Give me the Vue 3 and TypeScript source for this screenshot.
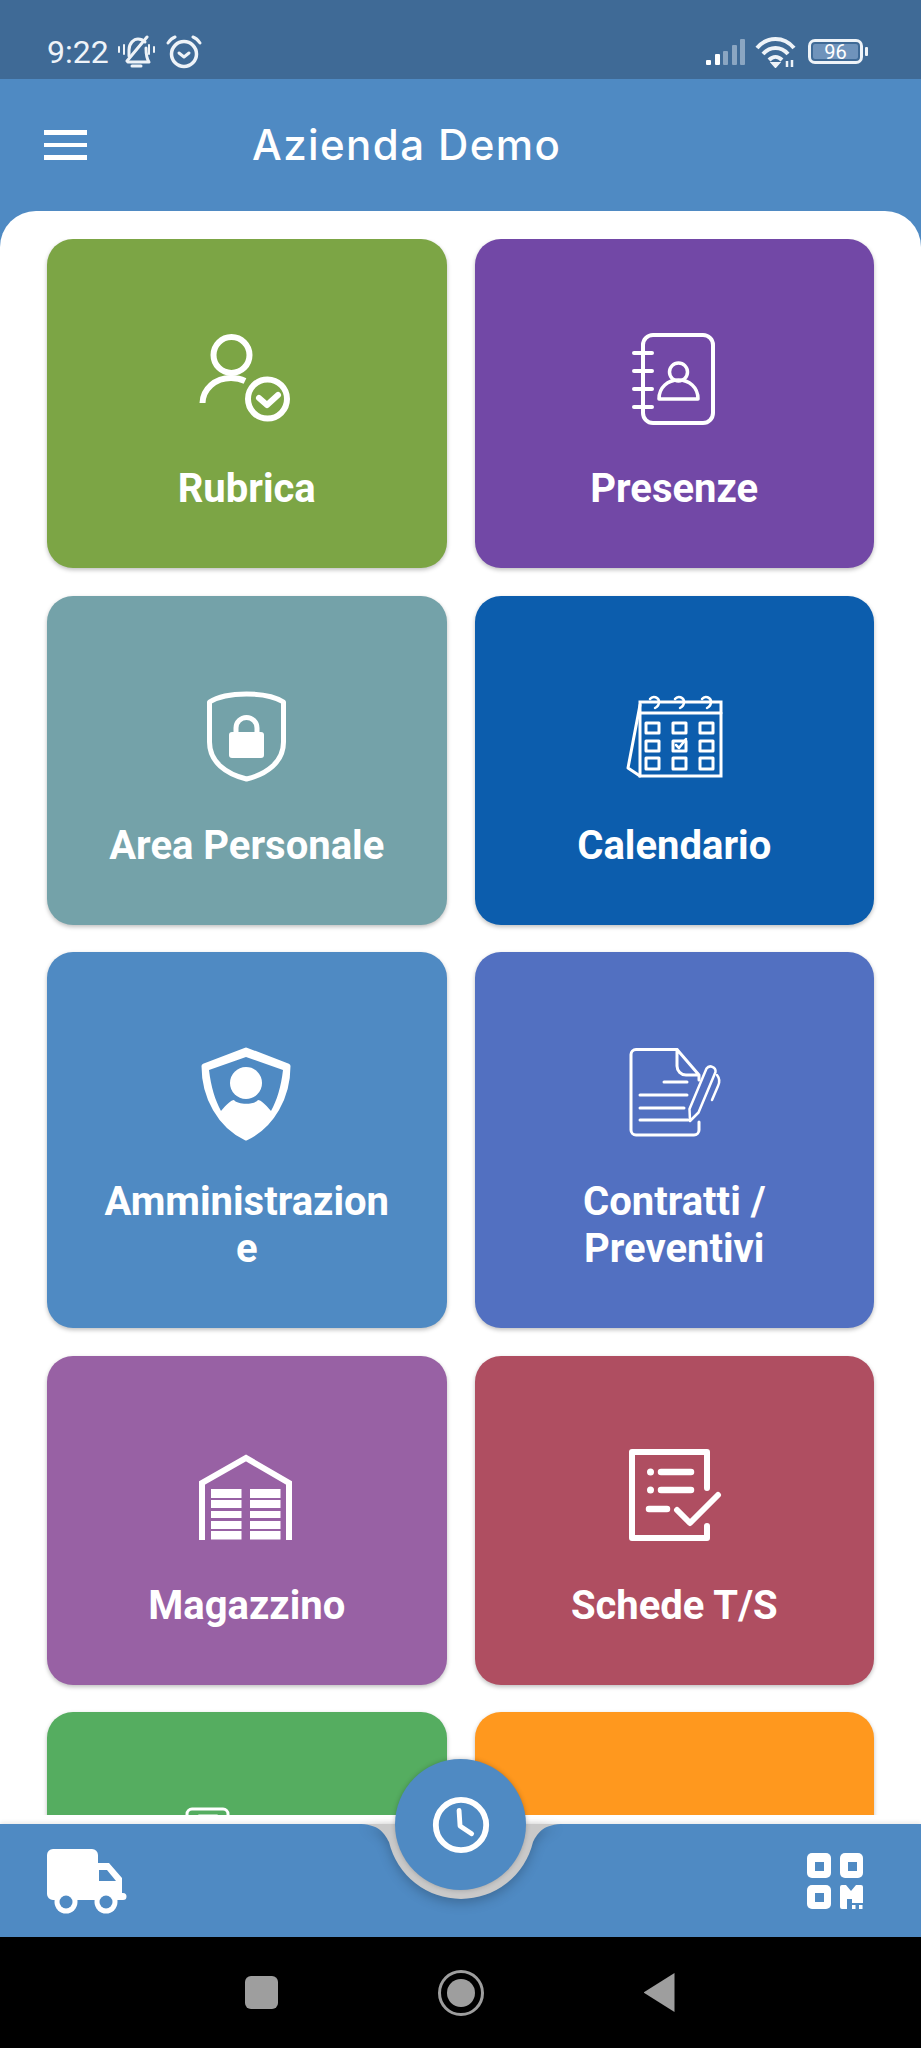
<template>
  <div class="phone">
    <div class="status">
      <div class="status-left">
        <span class="time">9:22</span>
        <svg class="st-bell" viewBox="0 0 38 34" fill="none" stroke="#eef3f8" stroke-width="3" stroke-linecap="round">
          <path d="M12 21 V15 C12 8 17 4 21 4 C24 4 26 5 28 7" />
          <path d="M29 13 C29 20 30 24 32 27 H11" stroke-linejoin="round" />
          <path d="M30 2 L10 26" />
          <path d="M15 31 H24" />
          <path d="M2 12 V17 M7 10 V19 M32 10 V19 M37 12 V17" stroke-width="2" />
        </svg>
        <svg class="st-alarm" viewBox="0 0 36 34" fill="none" stroke="#eef3f8" stroke-linecap="round" stroke-linejoin="round">
          <circle cx="18" cy="19" r="12.500" stroke-width="3.500" />
          <path d="M2 8 C4 5 6 3 9 2 M34 8 C32 5 30 3 27 2" stroke-width="3" />
          <path d="M13 18 L18 22 L23 18" stroke-width="3" />
        </svg>
      </div>
      <div class="status-right">
        <div class="signal">
          <i v-for="b in bars" :key="b.h" :class="{ dim: b.dim }" :style="{ height: b.h + 'px' }"></i>
        </div>
        <svg class="st-wifi" viewBox="0 0 42 32" fill="none" stroke="#eef3f8" stroke-width="4" stroke-linecap="butt">
          <path d="M2 12 C12 0 29 0 39 12" />
          <path d="M8 18 C15 10 26 10 33 18" />
          <path d="M14 24 C18 20 23 20 27 24" />
          <path d="M17 27 L20.500 31 L24 27 Z" fill="#eef3f8" stroke-width="2" />
          <path d="M32 25 V31 M37 24 V31" stroke-width="2.500" />
        </svg>
        <div class="battery">
          <div class="battery-box"><span>96</span></div>
          <i class="battery-tip"></i>
        </div>
      </div>
    </div>

    <header class="topbar">
      <div class="burger"><i></i><i></i><i></i></div>
      <h1>Azienda Demo</h1>
    </header>

    <main class="main">
      <div class="sheet">
        <div class="scroller">
          <div class="grid">
            <div v-for="card in cards" :key="card.icon" class="card" :style="{ background: card.color }">
              <svg class="icon" viewBox="0 0 120 100" fill="none" stroke="#fff" stroke-linecap="round" stroke-linejoin="round">
                <template v-if="card.icon === 'rubrica'">
                  <g stroke-width="6">
                    <ellipse cx="44.500" cy="26" rx="18" ry="18" />
                    <path d="M15.500 74 C16 60 28 49 44 49 C49 49 54 50 58 52" stroke-linecap="butt" />
                    <circle cx="80.500" cy="70" r="19.500" />
                    <path d="M72 69 L80 76 L91 66" />
                  </g>
                </template>
                <template v-else-if="card.icon === 'presenze'">
                  <rect x="29" y="6" width="70" height="88" rx="10" stroke-width="4" />
                  <path d="M20 24 H38 M20 42 H38 M20 60 H38 M20 78 H38" stroke-width="4" />
                  <circle cx="64.500" cy="43" r="9" stroke-width="3.500" />
                  <path d="M45 70 C45 58 54 51 64.500 51 C75 51 84 58 84 70 Z" stroke-width="3.500" />
                </template>
                <template v-else-if="card.icon === 'personale'">
                  <path d="M22.500 16 C32 10 46 8 59.500 8 C73 8 87 10 96.500 16 V56 C96.500 76 80 88 59.500 93 C39 88 22.500 76 22.500 56 Z" stroke-width="5" />
                  <rect x="42" y="46" width="35" height="26" rx="3" fill="#fff" stroke="none" />
                  <path d="M49 48 V42 a10.500 10.500 0 0 1 21 0 V48" stroke-width="5" stroke-linecap="butt" />
                </template>
                <template v-else-if="card.icon === 'calendario'">
                  <g stroke-width="3">
                    <rect x="26" y="16" width="81" height="74" stroke-linejoin="miter" />
                    <path d="M26 27 H107" />
                    <path d="M26 19 L14 82 L26 90" />
                    <path d="M36 13 a5 5 0 0 1 9 3 q0 4 -4 6 M61 13 a5 5 0 0 1 9 3 q0 4 -4 6 M88 13 a5 5 0 0 1 9 3 q0 4 -4 6" stroke-width="2.500" />
                    <rect x="32" y="37" width="13" height="10" />
                    <rect x="59" y="37" width="13" height="10" />
                    <rect x="86" y="37" width="13" height="10" />
                    <rect x="32" y="55" width="13" height="10" />
                    <rect x="59" y="55" width="13" height="10" />
                    <rect x="86" y="55" width="13" height="10" />
                    <rect x="32" y="72" width="13" height="11" />
                    <rect x="59" y="72" width="13" height="11" />
                    <rect x="86" y="72" width="13" height="11" />
                    <path d="M62 59 L65 62 L72 53" stroke-width="2.500" />
                  </g>
                </template>
                <template v-else-if="card.icon === 'admin'">
                  <path d="M59 8 L101 24 C101 55 85 84 59 96 C33 84 17 55 17 24 Z" fill="#fff" stroke-width="5" />
                  <path d="M59 15 L96 28 C94 45 90 58 84 69 C78 62 74 58 71 58 C67 63 51 63 47 58 C44 58 40 62 34 69 C28 58 24 45 22 28 Z" fill="#4f8ac3" stroke="none" />
                  <circle cx="59" cy="41" r="16" fill="#fff" stroke="none" />
                </template>
                <template v-else-if="card.icon === 'contratti'">
                  <g stroke-width="3">
                    <path d="M63 7.500 H22 a5 5 0 0 0 -5 5 V88 a5 5 0 0 0 5 5 H80 a5 5 0 0 0 5 -5 V80" />
                    <path d="M85 33 L63 7.500 V24 a9 9 0 0 0 9 9 H85 V38" />
                    <path d="M50 40 H73 M26 53 H73 M26 66 H70 M26 78 H74" />
                    <path d="M76 79 L75.500 67 L92.500 26.500 A5 5 0 0 1 101.500 30 L84.500 70.500 Z" stroke-width="2.500" />
                    <path d="M103 33 Q107 38 104 44 L98 58" stroke-width="2.500" />
                  </g>
                </template>
                <template v-else-if="card.icon === 'magazzino'">
                  <path d="M15 94 V37 L59 12 L102 37 V94" stroke-width="6" stroke-linecap="butt" stroke-linejoin="miter" />
                  <g fill="#fff" stroke="none">
                    <rect x="24" y="43" width="30.500" height="9" />
                    <rect x="24" y="54" width="30.500" height="8" />
                    <rect x="24" y="65" width="30.500" height="7" />
                    <rect x="24" y="75" width="30.500" height="8" />
                    <rect x="24" y="85" width="30.500" height="8.500" />
                    <rect x="63" y="43" width="30.500" height="9" />
                    <rect x="63" y="54" width="30.500" height="8" />
                    <rect x="63" y="65" width="30.500" height="7" />
                    <rect x="63" y="75" width="30.500" height="8" />
                    <rect x="63" y="85" width="30.500" height="8.500" />
                  </g>
                </template>
                <template v-else-if="card.icon === 'schede'">
                  <path d="M93 42 V6 H18 V92 H93 V80" stroke-width="6" />
                  <circle cx="36.500" cy="26" r="3.500" fill="#fff" stroke="none" />
                  <circle cx="36.500" cy="44" r="3.500" fill="#fff" stroke="none" />
                  <path d="M47 26 H77 M47 44 H77 M35 63 H53" stroke-width="6.500" />
                  <path d="M63 64 L76 77 L104 49" stroke-width="6" />
                </template>
                <template v-else-if="card.icon === 'documenti'">
                  <rect x="0" y="7" width="41" height="50" rx="5" stroke-width="3" />
                  <path d="M12 14 H30" stroke-width="3" />
                </template>
              </svg>
              <div v-if="card.label" class="label">{{ card.label }}</div>
            </div>
          </div>
        </div>
      </div>
    </main>

    <footer class="bottombar">
      <svg class="truck" viewBox="0 0 80 72">
        <path d="M6 0 H45 a6 6 0 0 1 6 6 V14 H62 L75 29 V44 H76 a3.500 3.500 0 0 1 0 7 H6 a6 6 0 0 1 -6 -6 V6 a6 6 0 0 1 6 -6 Z" fill="#fff" />
        <path d="M52 21 H60 L69 32 H52 Z" fill="#4f8ac3" />
        <circle cx="19" cy="53" r="11.500" fill="#fff" />
        <circle cx="19" cy="53" r="6.500" fill="#4f8ac3" />
        <circle cx="59" cy="53" r="11.500" fill="#fff" />
        <circle cx="59" cy="53" r="6.500" fill="#4f8ac3" />
      </svg>
      <svg class="qr" viewBox="0 0 56 56">
        <g fill="#fff">
          <rect x="0" y="0" width="24" height="25" rx="5" />
          <rect x="33" y="0" width="23" height="25" rx="5" />
          <rect x="0" y="32" width="24" height="24" rx="5" />
          <path d="M33 34 a2 2 0 0 1 2 -2 H39 L44 38 L49 32 H54 a2 2 0 0 1 2 2 V50 H45 V46 H40 V56 H35 a2 2 0 0 1 -2 -2 Z" />
          <rect x="45" y="52" width="3.500" height="4" />
          <rect x="52" y="52" width="3.500" height="4" />
        </g>
        <g fill="#4f8ac3">
          <rect x="8" y="9" width="9" height="9" />
          <rect x="41" y="9" width="9" height="9" />
          <rect x="8" y="40" width="9" height="9" />
        </g>
      </svg>
      <svg class="cradle" viewBox="0 0 240 80">
        <path d="M17 0 C37 0 43 8 48 18 A74 74 0 0 0 192 18 C197 8 203 0 223 0 Z" fill="#c9c9c9" />
      </svg>
      <button class="fab" type="button">
        <svg viewBox="0 0 64 64" fill="none" stroke="#fff" stroke-linecap="round" stroke-linejoin="round">
          <circle cx="32" cy="32" r="26" stroke-width="6" />
          <path d="M30 17 L31 33 L43 41" stroke-width="5" />
        </svg>
      </button>
    </footer>

    <nav class="navbar">
      <i class="nav-square"></i>
      <i class="nav-circle"></i>
      <i class="nav-back"></i>
    </nav>
  </div>
</template>

<script setup lang="ts">
interface Card {
  label: string
  color: string
  icon: string
}

const bars = [
  { h: 5, dim: false },
  { h: 11, dim: false },
  { h: 14, dim: true },
  { h: 20, dim: true },
  { h: 26, dim: true }
]

const cards: Card[] = [
  { label: 'Rubrica', color: '#7ca545', icon: 'rubrica' },
  { label: 'Presenze', color: '#7248a6', icon: 'presenze' },
  { label: 'Area Personale', color: '#74a2a9', icon: 'personale' },
  { label: 'Calendario', color: '#0c5dad', icon: 'calendario' },
  { label: 'Amministrazione', color: '#4f8ac3', icon: 'admin' },
  { label: 'Contratti / Preventivi', color: '#5270c1', icon: 'contratti' },
  { label: 'Magazzino', color: '#9861a4', icon: 'magazzino' },
  { label: 'Schede T/S', color: '#af4e61', icon: 'schede' },
  { label: '', color: '#55ad60', icon: 'documenti' },
  { label: '', color: '#ff981e', icon: 'altro' }
]
</script>

<style>
body {
  margin: 0;
}
</style>

<style scoped>
.phone {
  width: 921px;
  height: 2048px;
  display: flex;
  flex-direction: column;
  overflow: hidden;
  font-family: Roboto, "Liberation Sans", sans-serif;
  background: #4f8ac3;
}

.status {
  height: 79px;
  flex: none;
  display: flex;
  justify-content: space-between;
  align-items: center;
  padding: 24px 53px 0 47px;
  background: #3f6a96;
  color: #eef3f8;
  box-sizing: border-box;
}

.status-left,
.status-right {
  display: flex;
  align-items: center;
  height: 100%;
}

.time {
  font-size: 32px;
  line-height: 1;
}

.st-bell {
  width: 38px;
  height: 34px;
  margin-left: 8px;
}

.st-alarm {
  width: 36px;
  height: 34px;
  margin-left: 11px;
}

.signal {
  display: flex;
  align-items: flex-end;
  gap: 3.500px;
  height: 26px;
}

.signal i {
  width: 5px;
  background: #fff;
  border-radius: 1px;
}

.signal i.dim {
  background: #8ba6c2;
}

.st-wifi {
  width: 42px;
  height: 32px;
  margin-left: 10px;
}

.battery {
  display: flex;
  align-items: center;
  margin-left: 11px;
}

.battery-box {
  box-sizing: border-box;
  width: 55px;
  height: 25px;
  border: 3px solid #eef3f8;
  border-radius: 7px;
  padding: 2px;
  display: flex;
}

.battery-box span {
  flex: 1;
  background: #6f93bb;
  border-radius: 2px;
  font-size: 20px;
  line-height: 17px;
  text-align: center;
  color: #fff;
}

.battery-tip {
  width: 3px;
  height: 9px;
  margin-left: 2px;
  background: #eef3f8;
  border-radius: 1px;
}

.topbar {
  height: 132px;
  flex: none;
  display: flex;
  align-items: center;
  padding-left: 44px;
  box-sizing: border-box;
  color: #fff;
}

.burger {
  width: 43px;
  display: flex;
  flex-direction: column;
  gap: 8px;
}

.burger i {
  display: block;
  height: 4.500px;
  background: #fff;
}

.topbar h1 {
  margin: 0 0 0 165px;
  font-family: Inter, "Liberation Sans", sans-serif;
  font-size: 42px;
  font-weight: 500;
  letter-spacing: 1.400px;
  line-height: 1;
  white-space: nowrap;
}

.main {
  flex: 1;
  min-height: 0;
}

.sheet {
  height: 100%;
  box-sizing: border-box;
  background: #fff;
  border-radius: 36px 36px 0 0;
  padding: 28px 47px 9px;
  display: flex;
  flex-direction: column;
}

.scroller {
  flex: 1;
  min-height: 0;
  overflow: hidden;
  margin: 0 -6px;
  padding: 0 6px;
}

.grid {
  display: grid;
  grid-template-columns: 1fr 1fr;
  column-gap: 28px;
  row-gap: 27.500px;
  align-content: start;
}

.card {
  box-sizing: border-box;
  min-height: 329px;
  padding: 90px 50px 56px;
  border-radius: 26px;
  box-shadow: 0 2px 4px rgba(0, 0, 0, 0.25);
  display: flex;
  flex-direction: column;
  align-items: center;
  color: #fff;
}

.icon {
  width: 120px;
  height: 100px;
  flex: none;
  overflow: visible;
  margin-bottom: 36px;
}

.label {
  width: 100%;
  font-size: 40px;
  font-weight: 700;
  line-height: 47px;
  text-align: center;
  overflow-wrap: anywhere;
}

.bottombar {
  position: relative;
  height: 113px;
  flex: none;
  display: flex;
  justify-content: space-between;
  align-items: flex-start;
  padding: 25px 58px 0 47px;
  box-sizing: border-box;
  background: #4f8ac3;
  box-shadow: 0 -2px 4px rgba(0, 0, 0, 0.08);
}

.truck {
  width: 80px;
  height: 72px;
}

.qr {
  width: 56px;
  height: 56px;
  margin-top: 4px;
}

.cradle {
  position: absolute;
  left: 341px;
  top: 0;
  width: 240px;
  height: 80px;
  filter: drop-shadow(0 4px 6px rgba(0, 0, 0, 0.22));
}

.fab {
  position: absolute;
  left: 395px;
  top: -65px;
  width: 131px;
  height: 131px;
  padding: 0;
  border: 0;
  border-radius: 50%;
  background: #4f8ac3;
  display: flex;
  align-items: center;
  justify-content: center;
  box-shadow: 0 0 5px rgba(0, 0, 0, 0.22);
}

.fab svg {
  width: 62px;
  height: 62px;
}

.navbar {
  height: 111px;
  flex: none;
  background: #000;
  display: flex;
  align-items: center;
  justify-content: center;
  gap: 160px;
  padding-right: 2px;
  box-sizing: border-box;
}

.nav-square {
  width: 33px;
  height: 33px;
  border-radius: 6px;
  background: #9e9e9e;
}

.nav-circle {
  box-sizing: border-box;
  width: 46px;
  height: 46px;
  border-radius: 50%;
  border: 3.500px solid #9e9e9e;
  padding: 6px;
  background: #9e9e9e content-box;
}

.nav-back {
  width: 31px;
  height: 39px;
  background: #9e9e9e;
  clip-path: polygon(100% 0, 100% 100%, 0 50%);
}
</style>
